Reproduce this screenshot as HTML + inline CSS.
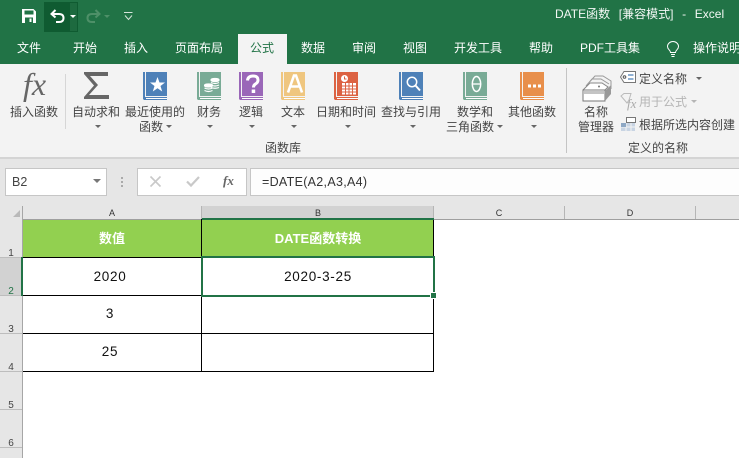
<!DOCTYPE html>
<html><head><meta charset="utf-8">
<style>
html,body{margin:0;padding:0}
body{width:739px;height:458px;overflow:hidden;position:relative;background:#fff;font-family:"Liberation Sans","Noto Sans CJK SC",sans-serif;font-size:12px;color:#444}
.a{position:absolute}
.t{position:absolute;white-space:nowrap;line-height:16px;height:16px}
.c{transform:translateX(-50%)}
.w{color:#fff}
.r{color:#444}
.tri{position:absolute;width:0;height:0;border-left:3px solid transparent;border-right:3px solid transparent;border-top:3px solid #666}
.rn{position:absolute;left:0;width:22px;text-align:center;font-size:10px;line-height:12px;color:#444}
.rl{position:absolute;left:0;width:22px;height:1px;background:#bdbdbd}
.k{position:absolute;background:#000}
.ch{position:absolute;top:208px;font-size:9px;line-height:11px;color:#333;transform:translateX(-50%)}
.cell{position:absolute;text-align:center;font-size:13.5px;color:#111;line-height:20px;transform:translateX(-50%);white-space:nowrap}
.num{letter-spacing:.7px}
svg{position:absolute;overflow:visible}
</style></head><body>
<!-- title bar -->
<div class="a" style="left:0;top:0;width:739px;height:64px;background:#217346"></div>
<div class="a" style="left:44px;top:2px;width:34px;height:30px;background:#0f5b31"></div>
<div class="a" style="left:70px;top:3px;width:7px;height:28px;background:#1d6a3f;border:0 solid #2c7a4e"></div>
<svg style="left:22px;top:9px" width="14" height="14" viewBox="0 0 14 14"><path d="M0 0H11.500L14 2.500V14H0Z" fill="#fff"/><rect x="2.500" y="1.500" width="9" height="4" fill="#217346"/><rect x="3" y="8.500" width="8" height="5.500" fill="#217346"/><rect x="7.500" y="9.500" width="2" height="3.500" fill="#fff"/></svg>
<svg style="left:50px;top:9px" width="15" height="15" viewBox="0 0 15 15"><path d="M5.500 1L1.500 5L5.500 8.500" fill="none" stroke="#fff" stroke-width="2"/><path d="M2 5H9Q13.500 5 13.500 9Q13.500 13 9 13H6" fill="none" stroke="#fff" stroke-width="2"/></svg>
<div class="tri" style="left:70px;top:15px;border-top-color:#fff"></div>
<svg style="left:86px;top:9px" width="15" height="15" viewBox="0 0 15 15"><path d="M9.500 1L13.500 5L9.500 8.500" fill="none" stroke="#4e9068" stroke-width="2"/><path d="M13 5H6Q1.500 5 1.500 9Q1.500 13 6 13H9" fill="none" stroke="#4e9068" stroke-width="2"/></svg>
<div class="tri" style="left:104px;top:15px;border-top-color:#4e9068"></div>
<svg style="left:124px;top:12px" width="9" height="9" viewBox="0 0 9 9"><path d="M0 .5H8.500M1 3.500L4.500 7.500L8 3.500" fill="none" stroke="#d5e4da" stroke-width="1"/></svg>
<div class="t w" style="left:555px;top:6px;font-size:12px;word-spacing:1px;color:#f2f7f4">DATE函数 &nbsp;[兼容模式] &nbsp;- &nbsp;Excel</div>
<!-- tabs -->
<div class="a" style="left:238px;top:34px;width:49px;height:30px;background:#f3f3f3"></div>
<div class="t w" style="left:17px;top:40px">文件</div>
<div class="t w" style="left:73px;top:40px">开始</div>
<div class="t w" style="left:124px;top:40px">插入</div>
<div class="t w" style="left:175px;top:40px">页面布局</div>
<div class="t" style="left:250px;top:40px;color:#217346">公式</div>
<div class="t w" style="left:301px;top:40px">数据</div>
<div class="t w" style="left:352px;top:40px">审阅</div>
<div class="t w" style="left:403px;top:40px">视图</div>
<div class="t w" style="left:454px;top:40px">开发工具</div>
<div class="t w" style="left:529px;top:40px">帮助</div>
<div class="t w" style="left:580px;top:40px">PDF工具集</div>
<svg style="left:667px;top:41px" width="12" height="17" viewBox="0 0 12 17"><path d="M3.500 11.500C3.500 9 .5 8.500 .5 5.500A5.500 5 0 0 1 11.500 5.500C11.500 8.500 8.500 9 8.500 11.500ZM4 13.500H8M4.500 15.500H7.500" fill="none" stroke="#fff" stroke-width="1"/></svg>
<div class="t w" style="left:693px;top:40px">操作说明</div>
<!-- ribbon -->
<div class="a" style="left:0;top:64px;width:739px;height:93px;background:#f3f3f3"></div>
<div class="a" style="left:0;top:157px;width:739px;height:2px;background:#d4d4d4"></div>
<div class="a" style="left:65px;top:74px;width:1px;height:55px;background:#d6d6d6"></div>
<div class="a" style="left:566px;top:68px;width:1px;height:85px;background:#c4c4c4"></div>
<!-- fx -->
<div class="t" style="left:23px;top:67px;font-family:'Liberation Serif',serif;font-style:italic;font-size:32px;line-height:34px;height:34px;color:#666">fx</div>
<div class="t c r" style="left:34px;top:104px">插入函数</div>
<!-- sigma -->
<svg style="left:84px;top:72px" width="25" height="27" viewBox="0 0 25 27"><path d="M0 0H24V4H6L14 13L5 23H25V27H0V25L10 13.500L0 2Z" fill="#666"/></svg>
<div class="t c r" style="left:96px;top:104px">自动求和</div><div class="tri" style="left:95px;top:125px"></div>
<!-- books -->
<svg style="left:143px;top:72px" width="24" height="28" viewBox="0 0 24 28"><path d="M0 0H2V25H24V28H1L0 27Z" fill="#4e81b8"/><rect x="3" y="0" width="21" height="24" fill="#4e81b8"/><rect x="3" y="26" width="21" height="1" fill="#fff"/><path d="M14.500 5L16.500 10.500H22L17.500 14L19.200 19.500L14.500 16.200L9.800 19.500L11.500 14L7 10.500H12.500Z" fill="#fff"/></svg>
<div class="t c r" style="left:155px;top:104px">最近使用的</div>
<div class="t r" style="left:139px;top:119px">函数</div><div class="tri" style="left:166px;top:125px"></div>

<svg style="left:197px;top:72px" width="24" height="28" viewBox="0 0 24 28"><path d="M0 0H2V25H24V28H1L0 27Z" fill="#79ab96"/><rect x="3" y="0" width="21" height="24" fill="#79ab96"/><rect x="3" y="26" width="21" height="1" fill="#fff"/><g fill="none" stroke="#fff" stroke-width="1.200"><ellipse cx="18" cy="8" rx="4" ry="1.500" fill="#fff"/><path d="M14 10.500Q18 12.500 22 10.500M14 13Q18 15 22 13M14 15.500Q18 17 22 15.500"/><ellipse cx="11.500" cy="13.500" rx="4" ry="1.500" fill="#fff"/><path d="M7.500 16Q11.500 18 15.500 16M7.500 18.500Q11.500 20.500 15.500 18.500"/></g></svg>
<div class="t c r" style="left:209px;top:104px">财务</div><div class="tri" style="left:207px;top:125px"></div>

<svg style="left:239px;top:72px" width="24" height="28" viewBox="0 0 24 28"><path d="M0 0H2V25H24V28H1L0 27Z" fill="#9a67b8"/><rect x="3" y="0" width="21" height="24" fill="#9a67b8"/><rect x="3" y="26" width="21" height="1" fill="#fff"/><path d="M8.500 8.500Q9 4 14 4Q19 4 19 8Q19 10.500 16.500 12Q14.500 13 14.500 15.500" fill="none" stroke="#fff" stroke-width="3"/><rect x="12.700" y="17.500" width="3.500" height="3.500" fill="#fff"/></svg>
<div class="t c r" style="left:251px;top:104px">逻辑</div><div class="tri" style="left:249px;top:125px"></div>

<svg style="left:281px;top:72px" width="24" height="28" viewBox="0 0 24 28"><path d="M0 0H2V25H24V28H1L0 27Z" fill="#efc67f"/><rect x="3" y="0" width="21" height="24" fill="#efc67f"/><rect x="3" y="26" width="21" height="1" fill="#fff"/><path d="M7 20.500L13 3.500H15L21 20.500M9.300 14.500H18.700" fill="none" stroke="#fff" stroke-width="2.600"/></svg>
<div class="t c r" style="left:293px;top:104px">文本</div><div class="tri" style="left:291px;top:125px"></div>

<svg style="left:334px;top:72px" width="24" height="28" viewBox="0 0 24 28"><path d="M0 0H2V25H24V28H1L0 27Z" fill="#dc6242"/><rect x="3" y="0" width="21" height="24" fill="#dc6242"/><rect x="3" y="26" width="21" height="1" fill="#fff"/><circle cx="10.500" cy="6.500" r="3.500" fill="#fff"/><path d="M10.500 4.500V7H12.500" stroke="#dc6242" fill="none"/><path d="M8 11H22V22.500H8Z" fill="#fff"/><path d="M11.500 11V22.500M15 11V22.500M18.500 11V22.500M8 14H22M8 17H22M8 20H22" stroke="#dc6242" stroke-width="1"/></svg>
<div class="t c r" style="left:346px;top:104px">日期和时间</div><div class="tri" style="left:345px;top:125px"></div>

<svg style="left:399px;top:72px" width="24" height="28" viewBox="0 0 24 28"><path d="M0 0H2V25H24V28H1L0 27Z" fill="#4e81b8"/><rect x="3" y="0" width="21" height="24" fill="#4e81b8"/><rect x="3" y="26" width="21" height="1" fill="#fff"/><circle cx="13" cy="10" r="4.700" fill="none" stroke="#fff" stroke-width="1.500"/><path d="M16.500 13.500L21 18.500" stroke="#fff" stroke-width="2"/></svg>
<div class="t c r" style="left:411px;top:104px">查找与引用</div><div class="tri" style="left:410px;top:125px"></div>

<svg style="left:463px;top:72px" width="24" height="28" viewBox="0 0 24 28"><path d="M0 0H2V25H24V28H1L0 27Z" fill="#79ab96"/><rect x="3" y="0" width="21" height="24" fill="#79ab96"/><rect x="3" y="26" width="21" height="1" fill="#fff"/><ellipse cx="13.500" cy="12" rx="4.200" ry="7.500" fill="none" stroke="#fff" stroke-width="1.500"/><path d="M9.500 12H17.500" stroke="#fff" stroke-width="1.300"/></svg>
<div class="t c r" style="left:475px;top:104px">数学和</div>
<div class="t r" style="left:446px;top:119px">三角函数</div><div class="tri" style="left:497px;top:125px"></div>

<svg style="left:520px;top:72px" width="24" height="28" viewBox="0 0 24 28"><path d="M0 0H2V25H24V28H1L0 27Z" fill="#e88f4b"/><rect x="3" y="0" width="21" height="24" fill="#e88f4b"/><rect x="3" y="26" width="21" height="1" fill="#fff"/><path d="M8 12.500h3v3h-3zM13 12.500h3v3h-3zM18 12.500h3v3h-3z" fill="#fff"/></svg>
<div class="t c r" style="left:532px;top:104px">其他函数</div><div class="tri" style="left:531px;top:125px"></div>

<div class="t c r" style="left:283px;top:140px">函数库</div>
<!-- names -->
<svg style="left:582px;top:75px" width="30" height="27" viewBox="0 0 30 27"><path d="M1 15L8 8H22L29 12V20L24 26H1Z" fill="#f3f3f3"/><path d="M4 11L10 4H19L27 9M7 7.500L13 1H21L29 6V14" fill="none" stroke="#999" stroke-width="1"/><path d="M1 15L8 8H20L26 12L23 15" fill="#fff" stroke="#888"/><rect x="1" y="15" width="22" height="11" fill="#fff" stroke="#777" stroke-width="1"/><rect x="2" y="16" width="20" height="3" fill="#c4c4c4"/><path d="M23 16L29 10V19L23 26Z" fill="#999"/><circle cx="17" cy="11.500" r="1" fill="#777"/></svg>
<div class="t c r" style="left:596px;top:104px">名称</div>
<div class="t c r" style="left:596px;top:119px">管理器</div>
<svg style="left:620px;top:71px" width="16" height="12" viewBox="0 0 16 12"><path d="M4 .5H15.500V11.500H4L.5 6Z" fill="#fff" stroke="#777"/><circle cx="4.500" cy="6" r="1.300" fill="none" stroke="#555"/><path d="M8 4H13.500M8 8H13.500" stroke="#4e81b8" stroke-width="1.300"/></svg>
<div class="t r" style="left:639px;top:71px">定义名称</div><div class="tri" style="left:696px;top:77px"></div>
<svg style="left:620px;top:93px" width="18" height="16" viewBox="0 0 18 16"><path d="M1 3L4 .5H11L9 7L7 10Z" fill="none" stroke="#bbb"/><text x="7" y="15" font-family="Liberation Serif,serif" font-style="italic" font-size="13" fill="#aaa">fx</text></svg>
<div class="t" style="left:639px;top:94px;color:#b5b5b5">用于公式</div><div class="tri" style="left:691px;top:100px;border-top-color:#b5b5b5"></div>
<svg style="left:621px;top:117px" width="15" height="14" viewBox="0 0 15 14"><rect x="5.500" y=".5" width="9" height="5" fill="#fff" stroke="#777"/><rect x="0" y="6" width="14" height="8" fill="#c8d4e3"/><path d="M5 6V14M10 6V14M0 10H14" stroke="#f3f3f3"/><rect x="0" y="6" width="5" height="4" fill="#8ea8c5"/></svg>
<div class="t r" style="left:639px;top:117px">根据所选内容创建</div>
<div class="t c r" style="left:658px;top:140px">定义的名称</div>
<!-- formula bar -->
<div class="a" style="left:0;top:159px;width:739px;height:60px;background:#e6e6e6"></div>
<div class="a" style="left:5px;top:168px;width:100px;height:26px;background:#fff;border:1px solid #c6c6c6"></div>
<div class="t" style="left:12px;top:174px;font-size:12.500px;color:#444">B2</div>
<div class="tri" style="left:93px;top:179px;border-left-width:4px;border-right-width:4px;border-top:4px solid #777"></div>
<div class="a" style="left:121px;top:177px;width:2px;height:2px;background:#aaa;box-shadow:0 4px 0 #aaa,0 8px 0 #aaa"></div>
<div class="a" style="left:137px;top:168px;width:108px;height:26px;background:#fff;border:1px solid #c6c6c6"></div>
<svg style="left:150px;top:176px" width="11" height="11" viewBox="0 0 11 11"><path d="M.5 .5L10.500 10.500M10.500 .5L.5 10.500" stroke="#c9c9c9" stroke-width="1.600"/></svg>
<svg style="left:186px;top:176px" width="14" height="11" viewBox="0 0 14 11"><path d="M1 5.500L5 9.500L13 1" fill="none" stroke="#c9c9c9" stroke-width="2.200"/></svg>
<div class="t" style="left:223px;top:173px;font-family:'Liberation Serif',serif;font-style:italic;font-weight:bold;font-size:13px;color:#666">fx</div>
<div class="a" style="left:250px;top:168px;width:489px;height:26px;background:#fdfdfd;border-top:1px solid #c6c6c6;border-bottom:1px solid #c6c6c6;border-left:1px solid #c6c6c6;box-sizing:content-box"></div>
<div class="t" style="left:262px;top:174px;font-size:12.500px;color:#333;letter-spacing:.3px">=DATE(A2,A3,A4)</div>
<!-- column headers -->
<div class="a" style="left:22px;top:206px;width:717px;height:13px;background:#e6e6e6"></div>
<div class="a" style="left:202px;top:206px;width:232px;height:13px;background:#d2d2d2"></div>
<div class="a" style="left:0;top:219px;width:739px;height:1px;background:#9f9f9f"></div>
<div class="a" style="left:201px;top:206px;width:1px;height:13px;background:#b5b5b5"></div>
<div class="a" style="left:564px;top:206px;width:1px;height:13px;background:#b5b5b5"></div>
<div class="a" style="left:695px;top:206px;width:1px;height:13px;background:#b5b5b5"></div>
<div class="a" style="left:433px;top:206px;width:1px;height:13px;background:#b5b5b5"></div>
<svg style="left:13px;top:210px" width="7" height="7"><path d="M7 0V7H0Z" fill="#b9b9b9"/></svg>
<div class="ch" style="left:112px">A</div>
<div class="ch" style="left:318px">B</div>
<div class="ch" style="left:499px">C</div>
<div class="ch" style="left:630px">D</div>
<!-- row headers -->
<div class="a" style="left:0;top:219px;width:22px;height:239px;background:#e6e6e6"></div>
<div class="a" style="left:0;top:258px;width:22px;height:38px;background:#d2d2d2"></div>
<div class="a" style="left:22px;top:206px;width:1px;height:252px;background:#a6a6a6"></div>
<div class="rl" style="top:257px"></div><div class="rl" style="top:295px"></div><div class="rl" style="top:333px"></div><div class="rl" style="top:371px"></div><div class="rl" style="top:409px"></div><div class="rl" style="top:447px"></div>
<div class="rn" style="top:248px">1</div>
<div class="rn" style="top:286px;color:#217346">2</div>
<div class="rn" style="top:324px">3</div>
<div class="rn" style="top:362px">4</div>
<div class="rn" style="top:400px">5</div>
<div class="rn" style="top:438px">6</div>
<!-- cells -->
<div class="a" style="left:23px;top:220px;width:411px;height:37px;background:#92d050"></div>
<div class="k" style="left:23px;top:257px;width:411px;height:1px"></div>
<div class="k" style="left:23px;top:295px;width:411px;height:1px"></div>
<div class="k" style="left:23px;top:333px;width:411px;height:1px"></div>
<div class="k" style="left:23px;top:371px;width:411px;height:1px"></div>
<div class="k" style="left:201px;top:219px;width:1px;height:153px"></div>
<div class="k" style="left:433px;top:219px;width:1px;height:153px"></div>
<div class="a" style="left:202px;top:218px;width:232px;height:2px;background:#217346"></div>
<div class="a" style="left:21px;top:257px;width:2px;height:39px;background:#217346"></div>
<div class="a" style="box-sizing:border-box;left:201px;top:256px;width:234px;height:41px;border:2px solid #217346"></div>
<div class="a" style="left:430px;top:292px;width:7px;height:7px;background:#fff"></div>
<div class="a" style="left:431px;top:293px;width:5px;height:5px;background:#217346"></div>
<div class="cell" style="left:112px;top:229px;color:#fff;font-weight:bold;font-size:13px">数值</div>
<div class="cell" style="left:318px;top:229px;color:#fff;font-weight:bold;font-size:13px">DATE函数转换</div>
<div class="cell num" style="left:110px;top:267px">2020</div>
<div class="cell num" style="left:318px;top:267px">2020-3-25</div>
<div class="cell num" style="left:110px;top:304px">3</div>
<div class="cell num" style="left:110px;top:342px">25</div>
</body></html>
